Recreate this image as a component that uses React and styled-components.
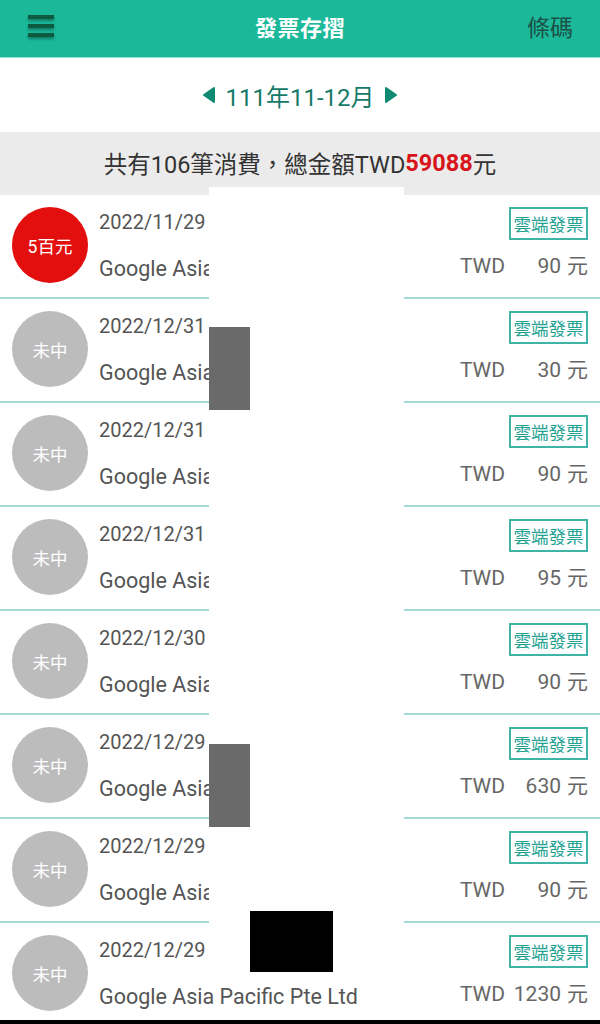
import React from "react";
import styled, { createGlobalStyle } from "styled-components";

const Global = createGlobalStyle`
  html, body { margin: 0; padding: 0; background: #fff; }
  body {
    width: 600px; height: 1024px; overflow: hidden;
    font-family: Roboto, "Noto Sans CJK TC", "Noto Sans", sans-serif;
  }
  * { box-sizing: border-box; }
`;

const Page = styled.div`
  position: relative;
  width: 600px;
  height: 1024px;
  overflow: hidden;
  background: #fff;
`;

const TopBar = styled.header`
  height: 58px;
  background: #1bb99a;
  border-bottom: 1px solid #8fe0cf;
  display: grid;
  grid-template-columns: 100px 1fr 100px;
  align-items: center;
`;

const Menu = styled.div`
  padding-left: 28px;
  display: flex;
  align-items: center;
  height: 100%;
  margin-top: -6px;
  svg { filter: drop-shadow(0 2px 1.5px rgba(0,0,0,0.35)); }
`;

const Title = styled.h1`
  margin: 0;
  text-align: center;
  color: #fff;
  font-size: 22px;
  font-weight: 700;
  letter-spacing: 0.5px;
  margin-top: -5px;
`;

const Barcode = styled.div`
  text-align: right;
  padding-right: 27px;
  color: #1d5046;
  font-size: 23px;
  margin-top: -5px;
`;

const PeriodNav = styled.div`
  height: 74px;
  display: flex;
  align-items: center;
  justify-content: center;
  gap: 9px;
  color: #167a68;
  font-size: 24px;
`;

const Summary = styled.div`
  height: 63px;
  background: #ebebeb;
  display: flex;
  align-items: center;
  justify-content: center;
  font-size: 23.5px;
  color: #333;
  padding-bottom: 1px;
`;

const Red = styled.span`
  color: #d8141b;
  font-weight: 700;
`;

const Row = styled.div`
  height: 104px;
  border-bottom: 2px solid #a3d9d6;
  display: grid;
  grid-template-columns: 99px 1fr auto;
`;

const CircleCell = styled.div`
  display: flex;
  align-items: center;
  padding-left: 12px;
  padding-bottom: 2px;
`;

const Circle = styled.div`
  width: 76px;
  height: 76px;
  border-radius: 50%;
  background: ${p => (p.$win ? "#e30f0f" : "#bcbcbc")};
  color: #fff;
  font-size: 17.5px;
  display: flex;
  align-items: center;
  justify-content: center;
`;

const Info = styled.div`
  display: flex;
  flex-direction: column;
  color: #555;
  white-space: nowrap;
`;

const DateText = styled.div`
  font-size: 20px;
  margin-top: 14px;
  line-height: 26px;
`;

const Seller = styled.div`
  font-size: 21.5px;
  margin-top: 20px;
  line-height: 28px;
`;

const Right = styled.div`
  display: flex;
  flex-direction: column;
  align-items: flex-end;
  padding-right: 12px;
`;

const Badge = styled.div`
  margin-top: 12px;
  border: 2px solid #3fb3a5;
  color: #22a292;
  font-size: 17.5px;
  height: 33px;
  width: 79px;
  display: flex;
  align-items: center;
  justify-content: center;
`;

const Amount = styled.div`
  margin-top: 12px;
  font-size: 21px;
  color: #666;
  display: flex;
  align-items: baseline;
  line-height: 28px;
`;

const Currency = styled.span``;

const Num = styled.span`
  width: 56px;
  text-align: right;
`;

const Unit = styled.span`
  margin-left: 6px;
`;

const Cover = styled.div`
  position: absolute;
  left: ${p => p.$x}px;
  top: ${p => p.$y}px;
  width: ${p => p.$w}px;
  height: ${p => p.$h}px;
  background: ${p => p.$c};
`;

const BottomBar = styled.div`
  position: absolute;
  left: 0; right: 0; bottom: 0;
  height: 4px;
  background: #000;
`;

const Arrow = ({ dir }) => (
  <svg width="14" height="18" viewBox="0 0 14 18">
    {dir === "left" ? (
      <path d="M12 2 L2 9 L12 16 Z" fill="#128a72" stroke="#128a72" strokeWidth="2" strokeLinejoin="round" />
    ) : (
      <path d="M2 2 L12 9 L2 16 Z" fill="#128a72" stroke="#128a72" strokeWidth="2" strokeLinejoin="round" />
    )}
  </svg>
);

const rows = [
  { date: "2022/11/29", amt: "90", win: true },
  { date: "2022/12/31", amt: "30" },
  { date: "2022/12/31", amt: "90" },
  { date: "2022/12/31", amt: "95" },
  { date: "2022/12/30", amt: "90" },
  { date: "2022/12/29", amt: "630" },
  { date: "2022/12/29", amt: "90" },
  { date: "2022/12/29", amt: "1230" },
];

export default function App() {
  return (
    <Page>
      <Global />
      <TopBar>
        <Menu>
          <svg width="26" height="24" viewBox="0 0 26 24">
            <rect x="0" y="1" width="26" height="4" fill="#0e5a3e" />
            <rect x="0" y="10" width="26" height="4" fill="#0e5a3e" />
            <rect x="0" y="19" width="26" height="4" fill="#0e5a3e" />
          </svg>
        </Menu>
        <Title>發票存摺</Title>
        <Barcode>條碼</Barcode>
      </TopBar>
      <PeriodNav>
        <Arrow dir="left" />
        <span>111年11-12月</span>
        <Arrow dir="right" />
      </PeriodNav>
      <Summary>
        共有106筆消費，總金額TWD<Red>59088</Red>元
      </Summary>
      {rows.map((r, i) => (
        <Row key={i}>
          <CircleCell>
            <Circle $win={r.win}>{r.win ? "5百元" : "未中"}</Circle>
          </CircleCell>
          <Info>
            <DateText>{r.date}</DateText>
            <Seller>Google Asia Pacific Pte Ltd</Seller>
          </Info>
          <Right>
            <Badge>雲端發票</Badge>
            <Amount>
              <Currency>TWD</Currency>
              <Num>{r.amt}</Num>
              <Unit>元</Unit>
            </Amount>
          </Right>
        </Row>
      ))}
      <Cover $x={209} $y={187} $w={195} $h={740} $c="#fff" />
      <Cover $x={209} $y={327} $w={41} $h={83} $c="#6b6a6b" />
      <Cover $x={209} $y={744} $w={41} $h={83} $c="#6b6a6b" />
      <Cover $x={250} $y={911} $w={83} $h={61} $c="#000" />
      <BottomBar />
    </Page>
  );
}
